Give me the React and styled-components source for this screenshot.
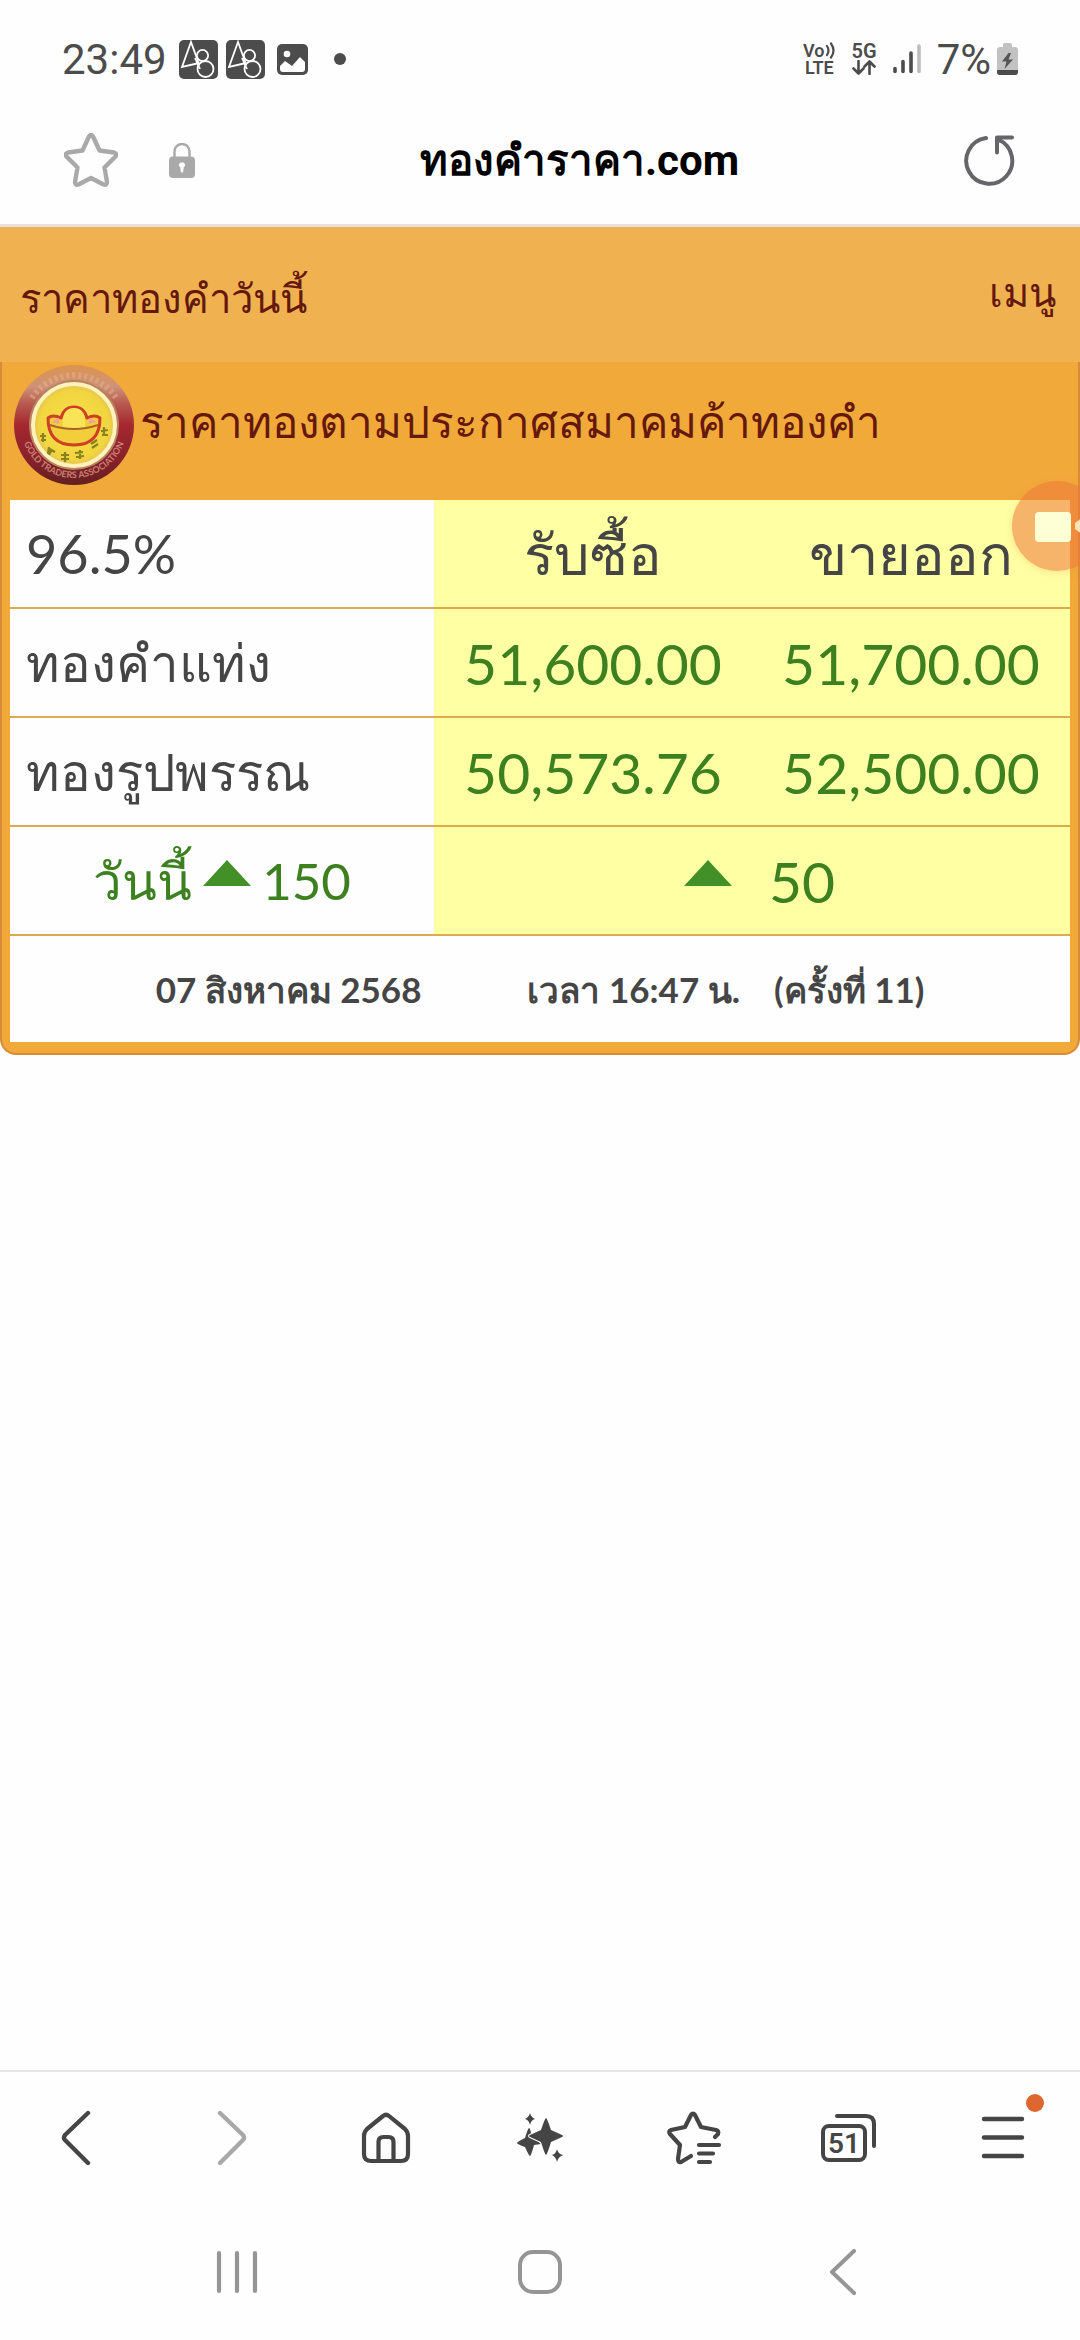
import React from "react";
import styled, { createGlobalStyle } from "styled-components";

const GlobalStyle = createGlobalStyle`
  * {
    box-sizing: border-box;
  }
  body {
    margin: 0;
    background: #fefefe;
    font-family: Lato, "Noto Sans", sans-serif;
    color: #454545;
  }
  button {
    border: 0;
    padding: 0;
    background: none;
    color: inherit;
    font: inherit;
  }
  svg {
    display: block;
    flex: none;
  }
`;

const Screen = styled.div`
  position: relative;
  display: flex;
  flex-direction: column;
  min-height: 100vh;
  overflow: hidden;
`;

const StatusBar = styled.header`
  display: flex;
  align-items: center;
  justify-content: space-between;
  height: 118px;
  padding: 0 62px;
  font-family: Roboto, sans-serif;
  font-size: 42px;
  color: #4c4c4c;
`;

const StatusGroup = styled.div`
  display: flex;
  align-items: center;
  gap: ${({ $gap }) => $gap}px;
`;

const Dot = styled.span`
  width: 12px;
  height: 12px;
  margin-left: 14px;
  border-radius: 50%;
  background: #4c4c4c;
`;

const NetworkLabel = styled.span`
  display: flex;
  flex-direction: column;
  align-items: center;
  font-size: ${({ $size }) => $size}px;
  font-weight: 600;
  line-height: 17px;
`;

const VoiceLabel = styled.span`
  display: flex;
  align-items: center;
`;

const AddressBar = styled.div`
  display: flex;
  align-items: center;
  height: 106px;
  padding: 0 64px 22px;
`;

const Address = styled.button`
  flex: 1;
  font-family: Roboto, "Noto Sans", sans-serif;
  font-size: 42px;
  font-weight: 700;
  color: #000;
`;

const IconButton = styled.button`
  display: flex;
  align-items: center;
  margin-right: ${({ $gap = 0 }) => $gap}px;
`;

const SiteHeader = styled.div`
  display: flex;
  align-items: center;
  justify-content: space-between;
  height: 138px;
  padding: 8px 24px 0 20px;
  border-top: 3px solid #e6e2de;
  background: #f0b251;
  font-size: 40px;
  color: #65180d;
`;

const MenuLink = styled.a`
  padding-bottom: 12px;
  color: inherit;
  text-decoration: none;
`;

const PricePanel = styled.section`
  padding: 0 8px 11px;
  border: 2px solid #d98b38;
  border-top: 0;
  border-radius: 0 0 16px 16px;
  background: #f1a93a;
`;

const PanelTitle = styled.h1`
  display: flex;
  align-items: flex-start;
  height: 138px;
  margin: 0;
  font-size: 44px;
  font-weight: 500;
  line-height: 118px;
  color: #65180d;
`;

const PriceTable = styled.table`
  width: 100%;
  table-layout: fixed;
  border-collapse: collapse;
  background: #fefefe;
`;

const Row = styled.tr`
  height: 109px;
  border-bottom: 2px solid #dbac4f;

  &:first-child {
    height: 108px;
  }
  &:last-child {
    height: 107px;
    border-bottom: 0;
  }
`;

const NameCell = styled.th`
  width: 40%;
  padding: 0 16px;
  text-align: left;
  font-size: 51px;
  font-weight: 400;
  line-height: 60px;
`;

const PurityCell = styled(NameCell)`
  font-size: 54px;
`;

const HeadCell = styled.th`
  padding: 0;
  background: #ffffa4;
  font-size: 56px;
  font-weight: 400;
  line-height: 60px;
`;

const PriceCell = styled.td`
  padding: 0;
  background: #ffffa4;
  text-align: center;
  font-size: 57px;
  line-height: 60px;
  color: #3c8020;
`;

const Change = styled.div`
  display: flex;
  align-items: center;
  justify-content: center;
  gap: ${({ $gap }) => $gap}px;
  color: #3c8020;
`;

const TotalCell = styled(PriceCell)`
  padding-left: 14px;
`;

const TimeCell = styled.td`
  padding: 0;
  font-size: 35px;
  font-weight: 700;
  line-height: 60px;
`;

const TimeLine = styled.div`
  display: flex;
  justify-content: center;
  gap: 34px;
`;

const Day = styled.span`
  margin-right: 72px;
`;

const RecorderButton = styled.button`
  position: absolute;
  top: 481px;
  right: -22px;
  width: 90px;
  height: 90px;
  border-radius: 50%;
  background: rgba(239, 119, 58, 0.55);
  box-shadow: 0 2px 8px rgba(239, 119, 58, 0.2);
`;

const BrowserNav = styled.nav`
  display: grid;
  grid-template-columns: repeat(7, 1fr);
  height: 134px;
  margin-top: auto;
  border-top: 2px solid #e5e5e5;
`;

const NavButton = styled.button`
  position: relative;
  display: flex;
  align-items: center;
  justify-content: center;
  color: ${({ $muted }) => ($muted ? "#a8a8a8" : "#454545")};
`;

const Badge = styled.span`
  position: absolute;
  top: 22px;
  right: 36px;
  width: 18px;
  height: 18px;
  border-radius: 50%;
  background: #de6630;
`;

const SystemNav = styled.nav`
  display: grid;
  grid-template-columns: repeat(3, 1fr);
  height: 136px;
  padding: 0 86px;
`;

const SystemButton = styled.button`
  display: flex;
  align-items: center;
  justify-content: center;
  color: #959595;
`;

const line = {
  fill: "none",
  stroke: "currentColor",
  strokeLinecap: "round",
  strokeLinejoin: "round",
};

const AppBadge = () => (
  <svg width="39" height="39" viewBox="0 0 39 39">
    <rect width="39" height="39" rx="5" fill="#4c4c4c" />
    <g fill="none" stroke="#fff" strokeWidth="1.8">
      <path d="M20 24 12 2 3 27l17-4" />
      <circle cx="23.500" cy="15.500" r="5.600" />
      <circle cx="26.500" cy="29" r="8" />
      <path d="m16 18 5 11" />
    </g>
  </svg>
);

const PictureIcon = () => (
  <svg width="31" height="31" viewBox="0 0 31 31">
    <rect width="31" height="31" rx="5" fill="#4c4c4c" />
    <circle cx="10" cy="10" r="3.300" fill="#fff" />
    <path d="M3 22l5-5 7 5 8-9 5 5v7q0 3-3 3H6q-3 0-3-3z" fill="#fff" />
  </svg>
);

const VoiceWaves = () => (
  <svg width="11" height="17" viewBox="0 0 11 17" {...line} strokeWidth="2.2">
    <path d="M2 4q3 4.500 0 9M6 1.500q5 7 0 14" />
  </svg>
);

const DataArrows = () => (
  <svg width="24" height="15" viewBox="0 0 24 15" {...line} strokeWidth="2.6">
    <path d="M6.500 1v12M1.500 8.500l5 5 5-5M17.500 14V2M12.500 6.500l5-5 5 5" />
  </svg>
);

const SignalIcon = () => (
  <svg width="28" height="30" viewBox="0 0 28 30" {...line} strokeWidth="3.6">
    <path d="M2 24.500v3M10 17.500v10M18 9v18.500" />
    <path d="M26 2v25.500" stroke="#bdbdbd" />
  </svg>
);

const BatteryIcon = () => (
  <svg width="21" height="32" viewBox="0 0 21 32">
    <path
      d="M6 2q0-2 2-2h5q2 0 2 2v2h3q3 0 3 3v22q0 3-3 3H3q-3 0-3-3V7q0-3 3-3h3z"
      fill="#c2c2c2"
    />
    <path d="M0 27h21v2q0 3-3 3H3q-3 0-3-3z" fill="#4c4c4c" />
    <path d="M11.500 10 5 18.500h4.500L7.500 26l8.500-9.500h-4.500l2.500-6.500z" fill="#555" />
  </svg>
);

const StarIcon = () => (
  <svg width="54" height="54" viewBox="0 0 54 54" {...line} strokeWidth="4.4" stroke="#a9a9a9">
    <path d="M25 3.500q2-3 4 0l6.500 14 14.500 2q3.500 1 1.500 4L40.500 34.500 43 49q0 3.500-3.500 2.500L27 45 14.500 51.500Q11 52.500 11 49l2.500-14.500L2.500 23.500q-2-3 1.500-4l14.500-2z" />
  </svg>
);

const LockIcon = () => (
  <svg width="26" height="35" viewBox="0 0 26 35">
    <path d="M5.500 15V8.500a7.500 7.500 0 0 1 15 0V15" fill="none" stroke="#a9a9a9" strokeWidth="2.400" />
    <rect y="13.500" width="26" height="21.500" rx="4" fill="#a9a9a9" />
    <path d="M13 20a2 2 0 0 1 1.200 4l-.5 5h-1.400l-.5-5A2 2 0 0 1 13 20z" fill="#fff" stroke="#fff" />
  </svg>
);

const ReloadIcon = () => (
  <svg width="52" height="52" viewBox="0 0 52 52" {...line} strokeWidth="4" stroke="#66666a">
    <path d="M22 4A23 23 0 1 0 34 5.500" />
    <path d="M48 3.500H33v15" />
    <path d="m33 4 4 3" />
  </svg>
);

const AssociationLogo = () => (
  <svg width="130" height="132" viewBox="0 0 130 132">
    <defs>
      <linearGradient id="ring" x1="0" y1="0" x2="0" y2="1">
        <stop offset="0" stopColor="#dc9450" />
        <stop offset="0.18" stopColor="#cf9277" />
        <stop offset="0.32" stopColor="#b85a50" />
        <stop offset="0.5" stopColor="#a5282f" />
        <stop offset="0.8" stopColor="#86212a" />
        <stop offset="1" stopColor="#64201e" />
      </linearGradient>
      <radialGradient id="face">
        <stop offset="0" stopColor="#fae04b" />
        <stop offset="0.85" stopColor="#f0d53f" />
        <stop offset="1" stopColor="#e5bd58" />
      </radialGradient>
      <path id="rim" d="M11 63a53 53 0 0 0 106 0" />
    </defs>
    <circle cx="64" cy="63" r="60" fill="url(#ring)" />
    <circle cx="64" cy="63" r="45" fill="#b98260" />
    <circle cx="64" cy="63" r="41" fill="url(#face)" stroke="#fff2ba" strokeWidth="4" />
    <g fill="#c98074" fontSize="9" fontWeight="700" textAnchor="middle">
      <text>
        <textPath href="#rim" startOffset="50%">
          GOLD TRADERS ASSOCIATION
        </textPath>
      </text>
    </g>
    <path d="M22 36a50 50 0 0 1 84 0" fill="none" stroke="#e6b58f" strokeWidth="6" strokeDasharray="3 3" opacity="0.5" />
    <g stroke="#cf3f25" strokeWidth="3" strokeLinejoin="round">
      <path d="M38 56q5-4 13 0 3-11 13-11t13 11q8-4 13 0 0 27-26 27T38 56z" fill="#f2ce3a" />
      <path d="M53 66q-2-20 11-20t11 20" fill="#f9e356" stroke="none" />
      <path d="M40 63q24 8 48 0" fill="none" stroke="#a8652a" strokeWidth="2" />
    </g>
    <path d="m41 60 8-4v6zm46 0-8-4v6z" fill="#f5a39a" />
    <path
      d="M30 74h6m-5 4h5m-3-7v9m5 6 7 4m-6-5-1 7m4-5-3 6m12 0h8m-8 4h8m-4-7v10m10-9 8-1m-7 5 8-1m-4-6v9m11-15 6-4m-5 8 6-4m3-13 7-1m-6 5h6m-4-8v9"
      fill="none"
      stroke="#8a8120"
      strokeWidth="2.200"
    />
  </svg>
);

const UpArrow = () => (
  <svg width="50" height="52" viewBox="0 0 50 52" aria-label="up">
    <path d="M25 5 49 31H1z" fill="#438f28" />
  </svg>
);

const CameraIcon = () => (
  <svg width="90" height="90" viewBox="0 0 90 90">
    <rect x="23" y="31" width="36" height="30" rx="4" fill="#ffffd6" />
    <path d="m63 42 12-9v24l-12-9z" fill="#ffe2b8" />
  </svg>
);

const BackIcon = () => (
  <svg width="32" height="56" viewBox="0 0 32 56" {...line} strokeWidth="4.4">
    <path d="M27 3 4 25q-2 3 0 5l23 23" />
  </svg>
);

const ForwardIcon = () => (
  <svg width="32" height="56" viewBox="0 0 32 56" {...line} strokeWidth="4.4">
    <path d="m5 3 23 22q2 3 0 5L5 53" />
  </svg>
);

const HomeIcon = () => (
  <svg width="50" height="52" viewBox="0 0 50 52" {...line} strokeWidth="4.2">
    <path d="M22 4q3-2.500 6 0l16 13q3 3 3 7v18q0 7-7 7H10q-7 0-7-7V24q0-4 3-7z" />
    <path d="M17.500 49V30q0-5 5-5h5q5 0 5 5v19" />
  </svg>
);

const SparkleIcon = () => (
  <svg width="46" height="50" viewBox="0 0 46 50" fill="currentColor">
    <path
      d="M12 15q1 0 2 5l4 6 6 5-7 1q-3 11-4 11T8 34q-8-3-8-4t8-5q3-10 4-10z"
    />
    <path
      d="M29 5q1 0 5 12l11 5q2 1 0 2l-11 5q-4 13-5 13t-5-13l-11-5q-2-1 0-2l11-5Q28 5 29 5z"
      stroke="#fefefe"
      strokeWidth="2"
      paintOrder="stroke"
    />
    <path d="M13 0q1 4 5 6-4 1-5 6-1-5-5-6 4-2 5-6zM40 36q1 5 6 6-5 2-6 7-1-5-5-7 4-1 5-6z" />
  </svg>
);

const BookmarksIcon = () => (
  <svg width="56" height="56" viewBox="0 0 56 56" {...line} strokeWidth="4.2">
    <path d="m25 46-10 6q-3 1-3-3l2-14L4 24q-2-3 1-4l14-3 6-12q2-3 4 0l6 12 15 3q3 1 2 4l-3 3" />
    <path d="M33 35h20M33 43.500h14M33 52h11" />
  </svg>
);

const TabsIcon = () => (
  <svg width="56" height="50" viewBox="0 0 56 50" {...line} strokeWidth="4">
    <rect x="2" y="13" width="42" height="34" rx="6" />
    <path d="M16 3h29q8 0 8 8v22" />
    <text
      x="23"
      y="40"
      textAnchor="middle"
      fill="currentColor"
      stroke="none"
      fontFamily="Roboto, sans-serif"
      fontSize="28"
      fontWeight="600"
    >
      51
    </text>
  </svg>
);

const MenuIcon = () => (
  <svg width="44" height="44" viewBox="0 0 44 44" {...line} strokeWidth="4.4">
    <path d="M3 3h38M3 21.500h38M3 40h38" />
  </svg>
);

const prices = [
  { name: "ทองคำแท่ง", buy: "51,600.00", sell: "51,700.00" },
  { name: "ทองรูปพรรณ", buy: "50,573.76", sell: "52,500.00" },
];

const navItems = [
  { label: "Back", icon: <BackIcon /> },
  { label: "Forward", icon: <ForwardIcon />, muted: true },
  { label: "Home", icon: <HomeIcon /> },
  { label: "Browsing assist", icon: <SparkleIcon /> },
  { label: "Bookmarks", icon: <BookmarksIcon /> },
  { label: "Tabs", icon: <TabsIcon /> },
  { label: "Menu", icon: <MenuIcon />, badge: true },
];

const App = () => (
  <Screen>
    <GlobalStyle />
    <StatusBar>
      <StatusGroup $gap={12}>
        <span>23:49</span>
        <StatusGroup $gap={8}>
          <AppBadge />
          <AppBadge />
        </StatusGroup>
        <StatusGroup $gap={12}>
          <PictureIcon />
          <Dot />
        </StatusGroup>
      </StatusGroup>
      <StatusGroup $gap={16}>
        <NetworkLabel $size={18}>
          <VoiceLabel>
            Vo
            <VoiceWaves />
          </VoiceLabel>
          <span>LTE</span>
        </NetworkLabel>
        <NetworkLabel $size={20}>
          <span>5G</span>
          <DataArrows />
        </NetworkLabel>
        <SignalIcon />
        <StatusGroup $gap={6}>
          <span>7%</span>
          <BatteryIcon />
        </StatusGroup>
      </StatusGroup>
    </StatusBar>
    <AddressBar>
      <IconButton $gap={51} aria-label="Add bookmark">
        <StarIcon />
      </IconButton>
      <IconButton aria-label="Site information">
        <LockIcon />
      </IconButton>
      <Address>ทองคำราคา.com</Address>
      <IconButton aria-label="Reload">
        <ReloadIcon />
      </IconButton>
    </AddressBar>

    <SiteHeader>
      <span>ราคาทองคำวันนี้</span>
      <MenuLink href="#menu">เมนู</MenuLink>
    </SiteHeader>
    <PricePanel>
      <PanelTitle>
        <AssociationLogo />
        ราคาทองตามประกาศสมาคมค้าทองคำ
      </PanelTitle>
      <PriceTable>
        <tbody>
          <Row>
            <PurityCell>96.5%</PurityCell>
            <HeadCell>รับซื้อ</HeadCell>
            <HeadCell>ขายออก</HeadCell>
          </Row>
          {prices.map(({ name, buy, sell }) => (
            <Row key={name}>
              <NameCell>{name}</NameCell>
              <PriceCell>{buy}</PriceCell>
              <PriceCell>{sell}</PriceCell>
            </Row>
          ))}
          <Row>
            <NameCell>
              <Change $gap={10}>
                <span>วันนี้</span>
                <UpArrow />
                <span>150</span>
              </Change>
            </NameCell>
            <TotalCell colSpan={2}>
              <Change $gap={36}>
                <UpArrow />
                <span>50</span>
              </Change>
            </TotalCell>
          </Row>
          <Row>
            <TimeCell colSpan={3}>
              <TimeLine>
                <Day>07 สิงหาคม 2568</Day>
                <span>เวลา 16:47 น.</span>
                <span>(ครั้งที่ 11)</span>
              </TimeLine>
            </TimeCell>
          </Row>
        </tbody>
      </PriceTable>
    </PricePanel>

    <RecorderButton aria-label="Screen recorder">
      <CameraIcon />
    </RecorderButton>

    <BrowserNav>
      {navItems.map(({ label, icon, muted, badge }) => (
        <NavButton key={label} aria-label={label} $muted={muted}>
          {icon}
          {badge && <Badge />}
        </NavButton>
      ))}
    </BrowserNav>
    <SystemNav>
      <SystemButton aria-label="Recent apps">
        <svg width="44" height="44" viewBox="0 0 44 44" {...line} strokeWidth="4.200">
          <path d="M4 3v38M22 3v38M40 3v38" />
        </svg>
      </SystemButton>
      <SystemButton aria-label="Home screen">
        <svg width="44" height="44" viewBox="0 0 44 44" {...line} strokeWidth="4">
          <rect x="2" y="2" width="40" height="40" rx="13" />
        </svg>
      </SystemButton>
      <SystemButton aria-label="Back">
        <svg width="28" height="46" viewBox="0 0 28 46" {...line} strokeWidth="4">
          <path d="M25 2 3 23l22 21" />
        </svg>
      </SystemButton>
    </SystemNav>
  </Screen>
);

export default App;
